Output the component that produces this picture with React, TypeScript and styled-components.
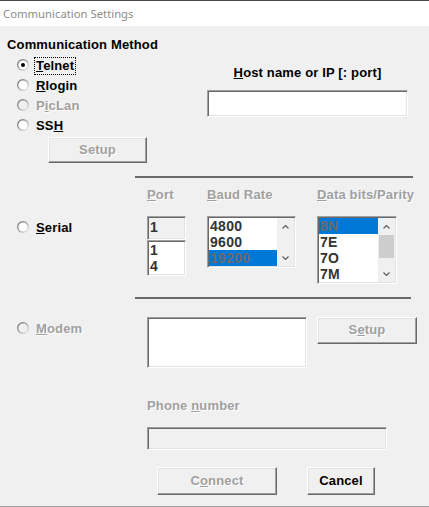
import React from "react";
import styled, { createGlobalStyle, css } from "styled-components";

const GlobalStyle = createGlobalStyle`
  html, body {
    margin: 0;
    padding: 0;
    background: #f0f0f0;
  }
  body {
    font-family: "Liberation Sans", Arial, sans-serif;
  }
`;

const disabledText = css`
  color: #a0a0a0;
  text-shadow: 1px 1px 0 #fff;
`;

const sunken = css`
  box-sizing: border-box;
  border: 1px solid;
  border-color: #a0a0a0 #fff #fff #a0a0a0;
  box-shadow: inset 1px 1px #696969, inset -1px -1px #e3e3e3;
  padding: 1px;
`;

const Window = styled.div`
  width: 429px;
  height: 507px;
  box-sizing: border-box;
  display: flex;
  flex-direction: column;
  background: #f0f0f0;
  border-bottom: 1px solid #a0a0a0;
  overflow: hidden;
`;

const TitleBar = styled.div`
  height: 25px;
  border-top: 1px solid #4a4a4a;
  background: #fff;
  padding-left: 3px;
  font-family: "Noto Sans", sans-serif;
  font-size: 11.3px;
  line-height: 25px;
  color: #8c8c8c;
`;

const Body = styled.div`
  flex: 1;
  display: flex;
  flex-direction: column;
  font: bold 13px/15px "Liberation Sans", Arial, sans-serif;
  letter-spacing: 0.15px;
  color: #000;
`;

const TopSection = styled.div`
  display: grid;
  grid-template-columns: 207px 201px;
`;

const MethodColumn = styled.div`
  display: flex;
  flex-direction: column;
  align-items: flex-start;
  padding-top: 11px;
`;

const Heading = styled.div`
  margin-left: 7px;
  margin-bottom: 4px;
`;

const RadioRow = styled.div<{ $disabled?: boolean }>`
  height: 20px;
  display: flex;
  align-items: flex-start;
  gap: 7px;
  padding-left: 17px;
  line-height: 20px;
  ${(p) => p.$disabled && disabledText}
`;

const RadioMark = styled.svg`
  margin-top: 3px;
  flex: none;
`;

const FocusLabel = styled.span`
  line-height: 15px;
  margin: 2px 0 0 -1px;
  padding: 0 1px 1px;
  outline: 1px dotted #000;
`;

const Button = styled.button<{ $w: number; $h: number; $disabled?: boolean }>`
  width: ${(p) => p.$w}px;
  height: ${(p) => p.$h}px;
  box-sizing: border-box;
  padding: 0 0 2px;
  background: #f0f0f0;
  border: 1px solid;
  border-color: #fff #696969 #696969 #fff;
  box-shadow: inset -1px -1px #a0a0a0, inset 1px 1px #e3e3e3;
  font: bold 13px/15px "Liberation Sans", Arial, sans-serif;
  letter-spacing: 0.15px;
  color: #000;
  ${(p) => p.$disabled && disabledText}
`;

const SetupButton = styled(Button)`
  margin: 1px 0 0 48px;
`;

const HostColumn = styled.div`
  display: flex;
  flex-direction: column;
  padding-top: 39px;
  gap: 10px;
`;

const HostLabel = styled.div`
  text-align: center;
`;

const TextBox = styled.div<{ $w: number; $h: number; $gray?: boolean }>`
  ${sunken}
  width: ${(p) => p.$w}px;
  height: ${(p) => p.$h}px;
  background: ${(p) => (p.$gray ? "#f0f0f0" : "#fff")};
`;

const Separator = styled.div<{ $w: number }>`
  margin: 13px 0 0 135px;
  width: ${(p) => p.$w}px;
  height: 2px;
  background: #6a6a6a;
`;

const SerialGrid = styled.div`
  margin-top: 9px;
  display: grid;
  grid-template-columns: 147px 60px 110px 1fr;
  grid-template-rows: 15px auto;
  row-gap: 14px;
  align-items: start;
`;

const ColumnLabel = styled.div`
  ${disabledText}
`;

const RadioCell = styled.div`
  padding-top: 2px;
`;

const PortStack = styled.div`
  display: flex;
  flex-direction: column;
`;

const ListBox = styled.div<{ $w: number; $h: number; $gray?: boolean }>`
  ${sunken}
  width: ${(p) => p.$w}px;
  height: ${(p) => p.$h}px;
  display: flex;
  background: ${(p) => (p.$gray ? "#f0f0f0" : "#fff")};
  font: bold 14px/16px "Liberation Sans", Arial, sans-serif;
  letter-spacing: 0.3px;
  color: #333;
`;

const Items = styled.div`
  flex: 1;
  display: flex;
  flex-direction: column;
`;

const Item = styled.div<{ $selected?: boolean }>`
  height: 16px;
  padding-left: 1px;
  background: ${(p) => (p.$selected ? "#0078d7" : "transparent")};
  color: ${(p) => (p.$selected ? "#6a6a6a" : "#333")};
`;

const PortValue = styled.div`
  line-height: 18px;
  padding-left: 1px;
`;

const ScrollBar = styled.div`
  width: 17px;
  display: flex;
  flex-direction: column;
  background: #f0f0f0;
`;

const ArrowButton = styled.div`
  height: 17px;
  display: flex;
  align-items: center;
  justify-content: center;
`;

const Track = styled.div`
  flex: 1;
  display: flex;
  flex-direction: column;
  align-items: center;
`;

const Thumb = styled.div<{ $h: number }>`
  width: 15px;
  height: ${(p) => p.$h}px;
  background: #cdcdcd;
`;

const ModemGrid = styled.div`
  margin-top: 18px;
  display: grid;
  grid-template-columns: 147px 170px 1fr;
  align-items: start;
`;

const PhoneLabel = styled.div`
  margin: 30px 0 0 147px;
  ${disabledText}
`;

const PhoneBox = styled(TextBox)`
  margin: 14px 0 0 147px;
`;

const ButtonRow = styled.div`
  display: flex;
  gap: 30px;
  margin-top: 17px;
  padding-left: 157px;
`;

const Mn = styled.u``;

let radioId = 0;

const Radio = ({ checked, disabled }: { checked?: boolean; disabled?: boolean }) => {
  const id = `rg${radioId++}`;
  return (
    <RadioMark width="12" height="12" viewBox="0 0 12 12">
      <defs>
        <linearGradient id={id} x1="0" y1="0" x2="1" y2="1">
          <stop offset="0" stopColor="#6e6e6e" />
          <stop offset="0.5" stopColor="#a8a8a8" />
          <stop offset="1" stopColor="#fafafa" />
        </linearGradient>
      </defs>
      <circle cx="6" cy="6" r="6" fill={`url(#${id})`} />
      <circle cx="6" cy="6" r="4.6" fill={disabled ? "#f0f0f0" : "#fff"} />
      {checked && <circle cx="6" cy="6" r="2" fill="#000" />}
    </RadioMark>
  );
};

const Arrow = ({ down }: { down?: boolean }) => (
  <svg width="7" height="4" viewBox="0 0 7 4">
    <polyline
      points={down ? "0.5,0.5 3.5,3.5 6.5,0.5" : "0.5,3.5 3.5,0.5 6.5,3.5"}
      fill="none"
      stroke="#606060"
      strokeWidth="1.2"
    />
  </svg>
);

const Scroll = ({ thumb }: { thumb?: number }) => (
  <ScrollBar>
    <ArrowButton>
      <Arrow />
    </ArrowButton>
    <Track>{thumb ? <Thumb $h={thumb} /> : null}</Track>
    <ArrowButton>
      <Arrow down />
    </ArrowButton>
  </ScrollBar>
);

export default function App() {
  radioId = 0;
  return (
    <>
      <GlobalStyle />
      <Window>
        <TitleBar>Communication Settings</TitleBar>
        <Body>
          <TopSection>
            <MethodColumn>
              <Heading>Communication Method</Heading>
              <RadioRow>
                <Radio checked />
                <FocusLabel>
                  <Mn>T</Mn>elnet
                </FocusLabel>
              </RadioRow>
              <RadioRow>
                <Radio />
                <span>
                  <Mn>R</Mn>login
                </span>
              </RadioRow>
              <RadioRow $disabled>
                <Radio disabled />
                <span>
                  P<Mn>i</Mn>cLan
                </span>
              </RadioRow>
              <RadioRow>
                <Radio />
                <span>
                  SS<Mn>H</Mn>
                </span>
              </RadioRow>
              <SetupButton $w={99} $h={26} $disabled>
                Setup
              </SetupButton>
            </MethodColumn>
            <HostColumn>
              <HostLabel>
                <Mn>H</Mn>ost name or IP [: port]
              </HostLabel>
              <TextBox $w={201} $h={27} />
            </HostColumn>
          </TopSection>

          <Separator $w={278} />

          <SerialGrid>
            <div />
            <ColumnLabel>
              <Mn>P</Mn>ort
            </ColumnLabel>
            <ColumnLabel>
              <Mn>B</Mn>aud Rate
            </ColumnLabel>
            <ColumnLabel>
              <Mn>D</Mn>ata bits/Parity
            </ColumnLabel>

            <RadioCell>
              <RadioRow>
                <Radio />
                <span>
                  <Mn>S</Mn>erial
                </span>
              </RadioRow>
            </RadioCell>
            <PortStack>
              <ListBox $w={39} $h={24} $gray>
                <PortValue>1</PortValue>
              </ListBox>
              <ListBox $w={39} $h={36}>
                <Items>
                  <Item>1</Item>
                  <Item>4</Item>
                </Items>
              </ListBox>
            </PortStack>
            <ListBox $w={89} $h={52}>
              <Items>
                <Item>4800</Item>
                <Item>9600</Item>
                <Item $selected>19200</Item>
              </Items>
              <Scroll />
            </ListBox>
            <ListBox $w={80} $h={68}>
              <Items>
                <Item $selected>8N</Item>
                <Item>7E</Item>
                <Item>7O</Item>
                <Item>7M</Item>
              </Items>
              <Scroll thumb={23} />
            </ListBox>
          </SerialGrid>

          <Separator $w={276} />

          <ModemGrid>
            <RadioCell>
              <RadioRow $disabled>
                <Radio disabled />
                <span>
                  <Mn>M</Mn>odem
                </span>
              </RadioRow>
            </RadioCell>
            <TextBox $w={160} $h={51} />
            <Button $w={100} $h={27} $disabled>
              S<Mn>e</Mn>tup
            </Button>
          </ModemGrid>

          <PhoneLabel>
            Phone <Mn>n</Mn>umber
          </PhoneLabel>
          <PhoneBox $w={240} $h={23} $gray />

          <ButtonRow>
            <Button $w={120} $h={28} $disabled>
              C<Mn>o</Mn>nnect
            </Button>
            <Button $w={68} $h={28}>
              Cancel
            </Button>
          </ButtonRow>
        </Body>
      </Window>
    </>
  );
}
